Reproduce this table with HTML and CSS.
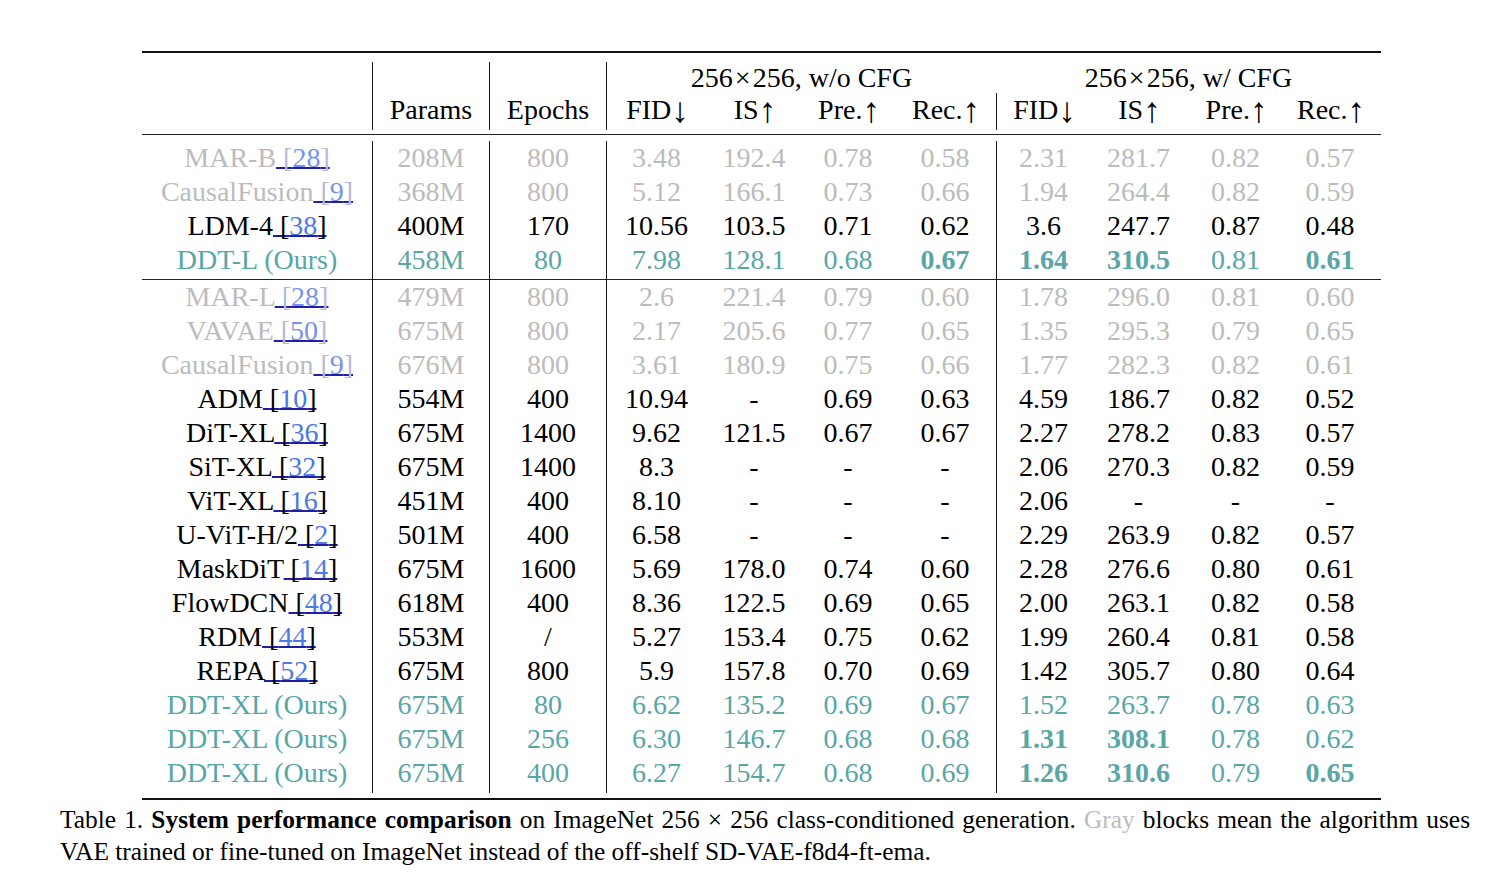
FILE: index.html
```html
<!DOCTYPE html>
<html>
<head>
<meta charset="utf-8">
<link rel="stylesheet" href="styles.css">
</head>
<body>
<div class="figure">
<table class="tbl">
  <colgroup>
    <col class="c-m"><col class="c-p"><col class="c-e">
    <col class="c-f1"><col class="c-i1"><col class="c-pr1"><col class="c-r1">
    <col class="c-f2"><col class="c-i2"><col class="c-pr2"><col class="c-r2">
  </colgroup>
  <tbody>
    <tr class="hr-thick"><td colspan="11"></td></tr>
    <tr class="gap-top"><td colspan="11"></td></tr>
    <tr class="row head1">
      <td></td><td class="vl"></td><td class="vl"></td>
      <td class="vl" colspan="4">256<span class="times">×</span>256, w/o CFG</td>
      <td colspan="4">256<span class="times">×</span>256, w/ CFG</td>
    </tr>
    <tr class="row head2">
      <td></td><td class="vl">Params</td><td class="vl">Epochs</td>
      <td class="vl">FID<span class="arr">↓</span></td><td>IS<span class="arr">↑</span></td><td>Pre.<span class="arr">↑</span></td><td>Rec.<span class="arr">↑</span></td>
      <td class="vl">FID<span class="arr">↓</span></td><td>IS<span class="arr">↑</span></td><td>Pre.<span class="arr">↑</span></td><td class="last">Rec.<span class="arr">↑</span></td>
    </tr>
    <tr class="gap-a"><td colspan="11"></td></tr>
    <tr class="hr-thin"><td colspan="11"></td></tr>
    <tr class="gap-b"><td colspan="11"></td></tr>

    <tr class="row gray">
      <td>MAR-B<span class="cite"> [<span class="n">28</span>]</span></td><td class="vl">208M</td><td class="vl">800</td>
      <td class="vl">3.48</td><td>192.4</td><td>0.78</td><td>0.58</td>
      <td class="vl">2.31</td><td>281.7</td><td>0.82</td><td class="last">0.57</td>
    </tr>
    <tr class="row gray">
      <td>CausalFusion<span class="cite"> [<span class="n">9</span>]</span></td><td class="vl">368M</td><td class="vl">800</td>
      <td class="vl">5.12</td><td>166.1</td><td>0.73</td><td>0.66</td>
      <td class="vl">1.94</td><td>264.4</td><td>0.82</td><td class="last">0.59</td>
    </tr>
    <tr class="row">
      <td>LDM-4<span class="cite"> [<span class="n">38</span>]</span></td><td class="vl">400M</td><td class="vl">170</td>
      <td class="vl">10.56</td><td>103.5</td><td>0.71</td><td>0.62</td>
      <td class="vl">3.6</td><td>247.7</td><td>0.87</td><td class="last">0.48</td>
    </tr>
    <tr class="row ours">
      <td>DDT-L (Ours)</td><td class="vl">458M</td><td class="vl">80</td>
      <td class="vl">7.98</td><td>128.1</td><td>0.68</td><td><b>0.67</b></td>
      <td class="vl"><b>1.64</b></td><td><b>310.5</b></td><td>0.81</td><td class="last"><b>0.61</b></td>
    </tr>
    <tr class="gap-m">
      <td></td><td class="vl"></td><td class="vl"></td>
      <td class="vl"></td><td></td><td></td><td></td>
      <td class="vl"></td><td></td><td></td><td></td>
    </tr>
    <tr class="hr-mid"><td colspan="11"></td></tr>

    <tr class="row gray">
      <td>MAR-L<span class="cite"> [<span class="n">28</span>]</span></td><td class="vl">479M</td><td class="vl">800</td>
      <td class="vl">2.6</td><td>221.4</td><td>0.79</td><td>0.60</td>
      <td class="vl">1.78</td><td>296.0</td><td>0.81</td><td class="last">0.60</td>
    </tr>
    <tr class="row gray">
      <td>VAVAE<span class="cite"> [<span class="n">50</span>]</span></td><td class="vl">675M</td><td class="vl">800</td>
      <td class="vl">2.17</td><td>205.6</td><td>0.77</td><td>0.65</td>
      <td class="vl">1.35</td><td>295.3</td><td>0.79</td><td class="last">0.65</td>
    </tr>
    <tr class="row gray">
      <td>CausalFusion<span class="cite"> [<span class="n">9</span>]</span></td><td class="vl">676M</td><td class="vl">800</td>
      <td class="vl">3.61</td><td>180.9</td><td>0.75</td><td>0.66</td>
      <td class="vl">1.77</td><td>282.3</td><td>0.82</td><td class="last">0.61</td>
    </tr>
    <tr class="row">
      <td>ADM<span class="cite"> [<span class="n">10</span>]</span></td><td class="vl">554M</td><td class="vl">400</td>
      <td class="vl">10.94</td><td>-</td><td>0.69</td><td>0.63</td>
      <td class="vl">4.59</td><td>186.7</td><td>0.82</td><td class="last">0.52</td>
    </tr>
    <tr class="row">
      <td>DiT-XL<span class="cite"> [<span class="n">36</span>]</span></td><td class="vl">675M</td><td class="vl">1400</td>
      <td class="vl">9.62</td><td>121.5</td><td>0.67</td><td>0.67</td>
      <td class="vl">2.27</td><td>278.2</td><td>0.83</td><td class="last">0.57</td>
    </tr>
    <tr class="row">
      <td>SiT-XL<span class="cite"> [<span class="n">32</span>]</span></td><td class="vl">675M</td><td class="vl">1400</td>
      <td class="vl">8.3</td><td>-</td><td>-</td><td>-</td>
      <td class="vl">2.06</td><td>270.3</td><td>0.82</td><td class="last">0.59</td>
    </tr>
    <tr class="row">
      <td>ViT-XL<span class="cite"> [<span class="n">16</span>]</span></td><td class="vl">451M</td><td class="vl">400</td>
      <td class="vl">8.10</td><td>-</td><td>-</td><td>-</td>
      <td class="vl">2.06</td><td>-</td><td>-</td><td class="last">-</td>
    </tr>
    <tr class="row">
      <td>U-ViT-H/2<span class="cite"> [<span class="n">2</span>]</span></td><td class="vl">501M</td><td class="vl">400</td>
      <td class="vl">6.58</td><td>-</td><td>-</td><td>-</td>
      <td class="vl">2.29</td><td>263.9</td><td>0.82</td><td class="last">0.57</td>
    </tr>
    <tr class="row">
      <td>MaskDiT<span class="cite"> [<span class="n">14</span>]</span></td><td class="vl">675M</td><td class="vl">1600</td>
      <td class="vl">5.69</td><td>178.0</td><td>0.74</td><td>0.60</td>
      <td class="vl">2.28</td><td>276.6</td><td>0.80</td><td class="last">0.61</td>
    </tr>
    <tr class="row">
      <td>FlowDCN<span class="cite"> [<span class="n">48</span>]</span></td><td class="vl">618M</td><td class="vl">400</td>
      <td class="vl">8.36</td><td>122.5</td><td>0.69</td><td>0.65</td>
      <td class="vl">2.00</td><td>263.1</td><td>0.82</td><td class="last">0.58</td>
    </tr>
    <tr class="row">
      <td>RDM<span class="cite"> [<span class="n">44</span>]</span></td><td class="vl">553M</td><td class="vl">/</td>
      <td class="vl">5.27</td><td>153.4</td><td>0.75</td><td>0.62</td>
      <td class="vl">1.99</td><td>260.4</td><td>0.81</td><td class="last">0.58</td>
    </tr>
    <tr class="row">
      <td>REPA<span class="cite"> [<span class="n">52</span>]</span></td><td class="vl">675M</td><td class="vl">800</td>
      <td class="vl">5.9</td><td>157.8</td><td>0.70</td><td>0.69</td>
      <td class="vl">1.42</td><td>305.7</td><td>0.80</td><td class="last">0.64</td>
    </tr>
    <tr class="row ours">
      <td>DDT-XL (Ours)</td><td class="vl">675M</td><td class="vl">80</td>
      <td class="vl">6.62</td><td>135.2</td><td>0.69</td><td>0.67</td>
      <td class="vl">1.52</td><td>263.7</td><td>0.78</td><td class="last">0.63</td>
    </tr>
    <tr class="row ours">
      <td>DDT-XL (Ours)</td><td class="vl">675M</td><td class="vl">256</td>
      <td class="vl">6.30</td><td>146.7</td><td>0.68</td><td>0.68</td>
      <td class="vl"><b>1.31</b></td><td><b>308.1</b></td><td>0.78</td><td class="last">0.62</td>
    </tr>
    <tr class="row ours">
      <td>DDT-XL (Ours)</td><td class="vl">675M</td><td class="vl">400</td>
      <td class="vl">6.27</td><td>154.7</td><td>0.68</td><td>0.69</td>
      <td class="vl"><b>1.26</b></td><td><b>310.6</b></td><td>0.79</td><td class="last"><b>0.65</b></td>
    </tr>
    <tr class="gap-c1">
      <td></td><td class="vl"></td><td class="vl"></td>
      <td class="vl"></td><td></td><td></td><td></td>
      <td class="vl"></td><td></td><td></td><td></td>
    </tr>
    <tr class="gap-c2"><td colspan="11"></td></tr>
    <tr class="hr-thick"><td colspan="11"></td></tr>
  </tbody>
</table>
<div class="caption">
  <span class="cap-line1">Table 1. <b>System performance comparison</b> on ImageNet 256 × 256 class-conditioned generation. <span class="gray-word">Gray</span> blocks mean the algorithm uses</span>
  <span class="cap-line2">VAE trained or fine-tuned on ImageNet instead of the off-shelf SD-VAE-f8d4-ft-ema.</span>
</div>
</div>
</body>
</html>
```

FILE: styles.css
```css
html, body {
  margin: 0;
  padding: 0;
  background: #ffffff;
}

body {
  font-family: "Liberation Serif", "Times New Roman", serif;
  color: #000000;
}

.figure {
  padding-top: 51px;
}

.tbl {
  margin-left: 142px;
  width: 1239px;
  table-layout: fixed;
  border-collapse: separate;
  border-spacing: 0;
  font-size: 28px;
}

.c-m { width: 230px; }
.c-p { width: 117px; }
.c-e { width: 117px; }
.c-f1 { width: 100px; }
.c-i1 { width: 96px; }
.c-pr1 { width: 92px; }
.c-r1 { width: 102px; }
.c-f2 { width: 94px; }
.c-i2 { width: 97px; }
.c-pr2 { width: 97px; }
.c-r2 { width: 97px; }

.tbl td {
  padding: 0;
  text-align: center;
  vertical-align: middle;
  white-space: nowrap;
}

.row td {
  height: 34px;
  line-height: 34px;
}

.head1 td {
  height: 31px;
  line-height: 31px;
}

.head2 td {
  height: 37px;
  line-height: 34px;
  vertical-align: top;
}

.row td.last {
  padding-right: 5px;
}

.vl {
  border-left: 1px solid #1a1a1a;
}

.times {
  margin: 0 2px;
}

.arr {
  font-size: 35px;
  line-height: 0;
  vertical-align: -3px;
  margin-left: 0;
  letter-spacing: -2px;
}

.hr-thick td {
  height: 2px;
  background: #111111;
  font-size: 0;
  line-height: 0;
}

.hr-thin td,
.hr-mid td {
  height: 1px;
  background: #222222;
  font-size: 0;
  line-height: 0;
}

.gap-top td { height: 9px; font-size: 0; line-height: 0; }
.gap-a td { height: 4px; font-size: 0; line-height: 0; }
.gap-b td { height: 6px; font-size: 0; line-height: 0; }
.gap-m td { height: 2px; font-size: 0; line-height: 0; }
.gap-c1 td { height: 3px; font-size: 0; line-height: 0; }
.gap-c2 td { height: 5px; font-size: 0; line-height: 0; }

.gray td {
  color: #bcbcbc;
}

.ours td {
  color: #58a6a6;
}

.cite {
  text-decoration-line: underline;
  text-decoration-color: #1e1ea6;
  text-decoration-thickness: 2px;
  text-underline-offset: 0px;
  text-decoration-skip-ink: none;
}

.cite .n {
  color: #4d78e6;
}

.gray .cite {
  color: #b7b9dc;
}

.gray .cite .n {
  color: #7592ee;
}

.caption {
  margin: 3px 0 0 60px;
  width: 1410px;
  font-size: 25.4px;
  line-height: 32px;
}

.cap-line1 {
  display: block;
  text-align: justify;
  text-align-last: justify;
  white-space: nowrap;
}

.cap-line2 {
  display: block;
  white-space: nowrap;
}

.gray-word {
  color: #bcbcbc;
}
```
